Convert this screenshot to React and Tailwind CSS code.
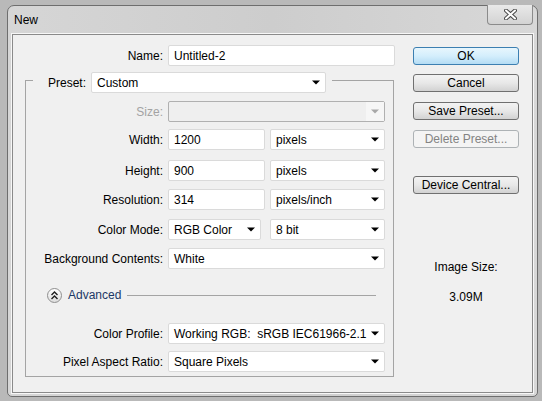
import React from 'react';

const Arrow = ({ color = '#000' }) => (
  <svg width="8" height="5" viewBox="0 0 8 5">
    <path d="M0 0.5 L8 0.5 L4 4.5 Z" fill={color} />
  </svg>
);

const TextInput = ({ value, width }) => (
  <div
    className={`h-[21px] ${width} bg-white border border-[#dadada] rounded-[2px] flex items-center pl-[5px] text-[12px] text-black`}
  >
    {value}
  </div>
);

const Select = ({ value, width }) => (
  <div
    className={`h-[21px] ${width} bg-white border border-[#dadada] rounded-[2px] flex items-center justify-between pl-[5px] pr-[5px] text-[12px] text-black`}
  >
    <span className="whitespace-pre">{value}</span>
    <Arrow />
  </div>
);

const Row = ({ label, labelWidth, disabled, className = '', children }) => (
  <div className={`flex items-center ${className}`}>
    <div
      className={`${labelWidth} shrink-0 text-right pr-[5px] text-[12px] ${disabled ? 'text-[#a3a3a3]' : 'text-black'}`}
    >
      {label}
    </div>
    {children}
  </div>
);

const Button = ({ children, primary, disabled, className = '' }) => {
  let look =
    'border-[#707070] bg-linear-to-b from-[#f3f3f3] via-[#e8e8e8] to-[#d2d2d2] text-black';
  if (primary)
    look = 'border-[#3c7fb1] bg-linear-to-b from-[#e8f6fd] via-[#d4eefc] to-[#b4dcf4] text-black';
  if (disabled) look = 'border-[#adb2b5] bg-[#f4f4f4] text-[#838383]';
  return (
    <div
      className={`h-[18px] w-[106px] border rounded-[3px] flex items-center justify-center text-[12px] ${look} ${className}`}
    >
      {children}
    </div>
  );
};

const CloseIcon = () => (
  <svg width="13" height="11" viewBox="0 0 13 11">
    <path d="M2 1.5 L11 9.5 M11 1.5 L2 9.5" stroke="#4a4a4a" strokeWidth="4" strokeLinecap="round" />
    <path d="M2 1.5 L11 9.5 M11 1.5 L2 9.5" stroke="#ffffff" strokeWidth="2" strokeLinecap="round" />
  </svg>
);

const ChevronsUp = () => (
  <svg width="9" height="9" viewBox="0 0 9 9">
    <path d="M1.5 4 L4.5 1 L7.5 4 M1.5 8 L4.5 5 L7.5 8" stroke="#1e1e1e" strokeWidth="1.4" fill="none" />
  </svg>
);

export default function App() {
  return (
    <div className="w-[542px] h-[401px] overflow-hidden bg-[#b9b9b9] pt-[5px] pl-[7px] font-['Liberation_Sans',Arial,sans-serif]">
      <div className="w-[531px] h-[392px] border border-[#6e6e6e] rounded-t-[7px] rounded-b-[5px] bg-linear-to-r from-[#d6d6d6] via-[#cdcdcd] to-[#d8d8d8] flex flex-col">
        {/* title bar */}
        <div className="h-[28px] flex items-start justify-between">
          <div className="pl-[6px] pt-[7px] text-[12px] leading-[15px] text-black">New</div>
          <div className="mr-[4px] -mt-px w-[46px] h-[20px] border border-t-0 border-[#8b8b8b] rounded-b-[4px] bg-linear-to-b from-[#e9e9e9] to-[#d3d3d3] flex items-center justify-center">
            <CloseIcon />
          </div>
        </div>

        {/* content panel */}
        <div className="mx-[4px] h-[359px] border border-[#8a8a8a] bg-[#f0f0f0] shadow-[0_0_0_1px_#f7f7f7] flex">
          {/* left column */}
          <div className="w-[382px] flex flex-col pt-[10px]">
            <Row label="Name:" labelWidth="w-[155px]">
              <TextInput value="Untitled-2" width="w-[227px]" />
            </Row>

            <div className="ml-[12px] mt-[14px] w-[369px] border border-[#a4a4a4] flex flex-col pb-[4px]">
              {/* legend */}
              <div className="-mt-[9px] ml-[7px] self-start bg-[#f0f0f0] flex items-center pl-[15px] pr-[6px]">
                <span className="text-[12px] text-black pr-[5px]">Preset:</span>
                <Select value="Custom" width="w-[235px]" />
              </div>

              <Row label="Size:" labelWidth="w-[142px]" disabled className="mt-[8px]">
                <div className="h-[21px] w-[217px] border border-[#b0b0b0] rounded-[2px] bg-[#efefef] flex justify-end">
                  <div className="w-[18px] h-full bg-[#f6f6f6] flex items-center justify-center">
                    <Arrow color="#a8a8a8" />
                  </div>
                </div>
              </Row>

              <Row label="Width:" labelWidth="w-[142px]" className="mt-[7px]">
                <TextInput value="1200" width="w-[97px]" />
                <div className="ml-[5px]">
                  <Select value="pixels" width="w-[115px]" />
                </div>
              </Row>

              <Row label="Height:" labelWidth="w-[142px]" className="mt-[10px]">
                <TextInput value="900" width="w-[97px]" />
                <div className="ml-[5px]">
                  <Select value="pixels" width="w-[115px]" />
                </div>
              </Row>

              <Row label="Resolution:" labelWidth="w-[142px]" className="mt-[8px]">
                <TextInput value="314" width="w-[97px]" />
                <div className="ml-[5px]">
                  <Select value="pixels/inch" width="w-[115px]" />
                </div>
              </Row>

              <Row label="Color Mode:" labelWidth="w-[142px]" className="mt-[9px]">
                <Select value="RGB Color" width="w-[93px]" />
                <div className="ml-[9px]">
                  <Select value="8 bit" width="w-[115px]" />
                </div>
              </Row>

              <Row label="Background Contents:" labelWidth="w-[142px]" className="mt-[8px]">
                <Select value="White" width="w-[217px]" />
              </Row>

              {/* advanced */}
              <div className="mt-[19px] ml-[21px] mr-[17px] h-[15px] leading-[15px] flex items-center">
                <div className="w-[15px] h-[15px] rounded-full border border-[#8f8f8f] bg-linear-to-b from-[#ffffff] to-[#dedede] flex items-center justify-center">
                  <ChevronsUp />
                </div>
                <span className="ml-[6px] text-[12px] text-[#1c3866]">Advanced</span>
                <div className="ml-[6px] flex-1 h-px bg-[#a4a4a4]" />
              </div>

              <Row label="Color Profile:" labelWidth="w-[142px]" className="mt-[20px]">
                <Select value="Working RGB:  sRGB IEC61966-2.1" width="w-[217px]" />
              </Row>

              <Row label="Pixel Aspect Ratio:" labelWidth="w-[142px]" className="mt-[7px]">
                <Select value="Square Pixels" width="w-[217px]" />
              </Row>
            </div>
          </div>

          {/* right column */}
          <div className="ml-[18px] w-[106px] flex flex-col items-center pt-[12px]">
            <Button primary>OK</Button>
            <Button className="mt-[9px]">Cancel</Button>
            <Button className="mt-[10px]">Save Preset...</Button>
            <Button disabled className="mt-[10px]">Delete Preset...</Button>
            <Button className="mt-[28px]">Device Central...</Button>
            <div className="mt-[66px] text-[12px] leading-[15px] text-black">Image Size:</div>
            <div className="mt-[15px] text-[12px] leading-[15px] text-black">3.09M</div>
          </div>
        </div>
      </div>
    </div>
  );
}
